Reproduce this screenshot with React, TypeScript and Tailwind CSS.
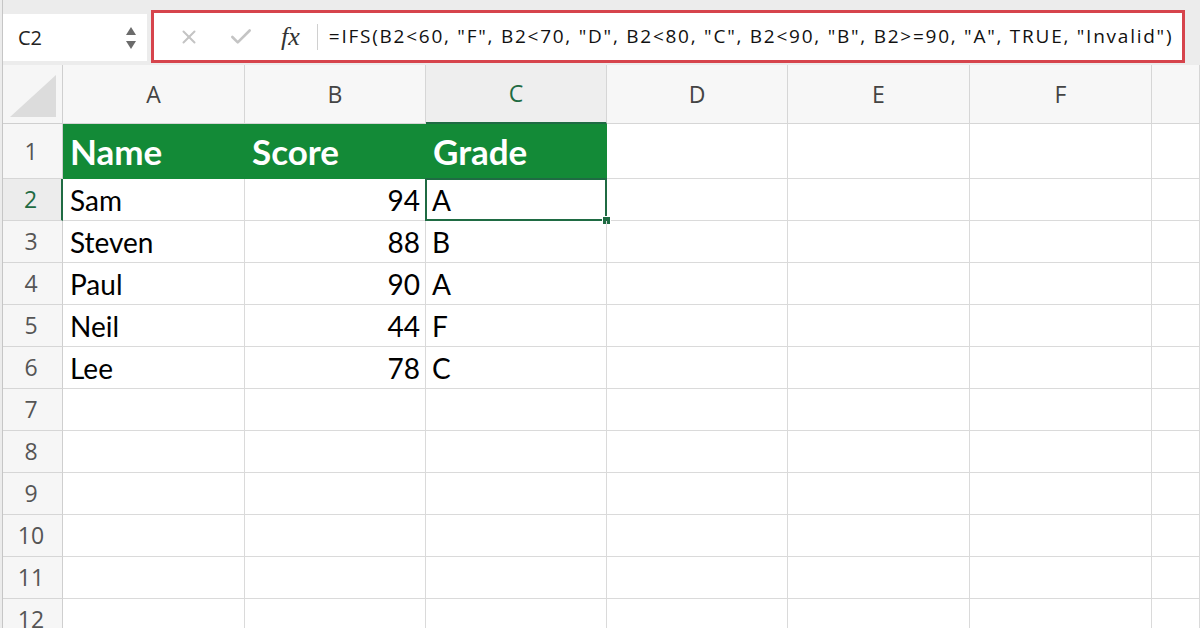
import { X, Check } from 'lucide-react'

const COLS = ['A', 'B', 'C', 'D', 'E', 'F', '']

// sheet data, rows 2..6
const ROWS = [
  { name: 'Sam', score: 94, grade: 'A' },
  { name: 'Steven', score: 88, grade: 'B' },
  { name: 'Paul', score: 90, grade: 'A' },
  { name: 'Neil', score: 44, grade: 'F' },
  { name: 'Lee', score: 78, grade: 'C' },
]

const FORMULA = '=IFS(B2<60, "F", B2<70, "D", B2<80, "C", B2<90, "B", B2>=90, "A", TRUE, "Invalid")'

const cellFont = { fontFamily: 'Lato, "Open Sans", sans-serif' }
const uiFont = { fontFamily: '"Open Sans", "Liberation Sans", sans-serif' }

function RowHeader({ n, active = false }: { n: number; active?: boolean }) {
  return (
    <div
      className={`flex items-center justify-center border-b border-[#d6d6d6] text-[23px] ${
        active
          ? 'border-r-2 border-r-[#1f6b43] bg-[#ececec] text-[#1f6b43]'
          : 'border-r border-r-[#cfcfcf] bg-[#f6f6f6] text-[#555]'
      }`}
      style={uiFont}
    >
      {n}
    </div>
  )
}

function EmptyCell() {
  return <div className="border-b border-r border-[#dadada] bg-white" />
}

export default function App() {
  return (
    <div className="relative h-[628px] w-[1200px] overflow-hidden bg-white">
      {/* window edge */}
      <div className="absolute bottom-0 left-0 top-0 z-20 w-[3px] border-r border-[#c6c6c6] bg-[#ececec]" />

      {/* Name box + formula bar */}
      <div className="flex h-[65px] bg-[#ececec]">
        <div className="mt-[14px] flex h-[47px] w-[147px] items-center justify-between bg-white pl-[18px] pr-[10px]">
          <span className="text-[20px] text-[#222]" style={uiFont}>
            C2
          </span>
          <svg width="12" height="26" viewBox="0 0 12 26">
            <path d="M6 2 L11 10 L1 10 Z" fill="#6b6b6b" />
            <path d="M1 16 L11 16 L6 24 Z" fill="#6b6b6b" />
          </svg>
        </div>
        <div className="ml-[4px] mt-[10px] flex h-[53px] w-[1034px] items-center border-[3px] border-[#d6444c] bg-white">
          <X className="ml-[24px] text-[#c4c4c4]" size={22} strokeWidth={2.2} />
          <Check className="ml-[28px] text-[#c4c4c4]" size={26} strokeWidth={2.4} />
          <span
            className="ml-[27px] text-[26px] italic text-[#333]"
            style={{ fontFamily: '"Liberation Serif", "DejaVu Serif", serif' }}
          >
            fx
          </span>
          <div className="ml-[17px] h-[26px] w-px bg-[#d0d0d0]" />
          <span
            className="ml-[11px] whitespace-nowrap text-[19px] tracking-[1.75px] text-[#111]"
            style={uiFont}
          >
            {FORMULA}
          </span>
        </div>
      </div>

      {/* Grid */}
      <div className="grid grid-cols-[63px_182px_181px_181px_181px_182px_182px_1fr] grid-rows-[59px_55px_repeat(11,42px)]">
        {/* corner */}
        <div className="flex items-end justify-end border-b border-r border-[#cfcfcf] bg-[#f6f6f6] p-[6px]">
          <svg width="46" height="42" viewBox="0 0 46 42">
            <path d="M46 0 L46 42 L0 42 Z" fill="#dcdcdc" />
          </svg>
        </div>
        {COLS.map((c, i) => (
          <div
            key={i}
            className={`flex items-center justify-center text-[23px] ${
              c === 'C'
                ? 'border-b-2 border-r border-b-[#1f6b43] border-r-[#d6d6d6] bg-[#eeeeee] text-[#1f6b43]'
                : 'border-b border-r border-[#d6d6d6] bg-[#f7f7f7] text-[#444]'
            }`}
            style={uiFont}
          >
            {c}
          </div>
        ))}

        {/* row 1: header */}
        <RowHeader n={1} />
        {['Name', 'Score', 'Grade'].map((h) => (
          <div
            key={h}
            className="flex items-center bg-[#138a37] pl-[7px] text-[35px] font-bold text-white"
            style={cellFont}
          >
            {h}
          </div>
        ))}
        {[0, 1, 2, 3].map((k) => (
          <EmptyCell key={k} />
        ))}

        {/* rows 2..6 */}
        {ROWS.map((r, i) => (
          <div key={r.name} className="contents">
            <RowHeader n={i + 2} active={i === 0} />
            <div
              className="flex items-center border-b border-r border-[#dadada] pl-[7px] text-[28px] text-black"
              style={cellFont}
            >
              {r.name}
            </div>
            <div
              className="flex items-center justify-end border-b border-r border-[#dadada] pr-[5px] text-[28px] text-black"
              style={cellFont}
            >
              {r.score}
            </div>
            <div
              className="relative flex items-center border-b border-r border-[#dadada] pl-[6px] text-[28px] text-black"
              style={cellFont}
            >
              {r.grade}
              {i === 0 && (
                <>
                  <div className="absolute -left-px -top-px bottom-[-1px] right-[-1px] border-2 border-[#1f6b43]" />
                  <div className="absolute bottom-[-5px] right-[-5px] h-[9px] w-[9px] border border-white bg-[#1f6b43]" />
                </>
              )}
            </div>
            {[0, 1, 2, 3].map((k) => (
              <EmptyCell key={k} />
            ))}
          </div>
        ))}

        {/* rows 7..12 empty */}
        {[7, 8, 9, 10, 11, 12].map((n) => (
          <div key={n} className="contents">
            <RowHeader n={n} />
            {COLS.map((_, k) => (
              <EmptyCell key={k} />
            ))}
          </div>
        ))}
      </div>
    </div>
  )
}
